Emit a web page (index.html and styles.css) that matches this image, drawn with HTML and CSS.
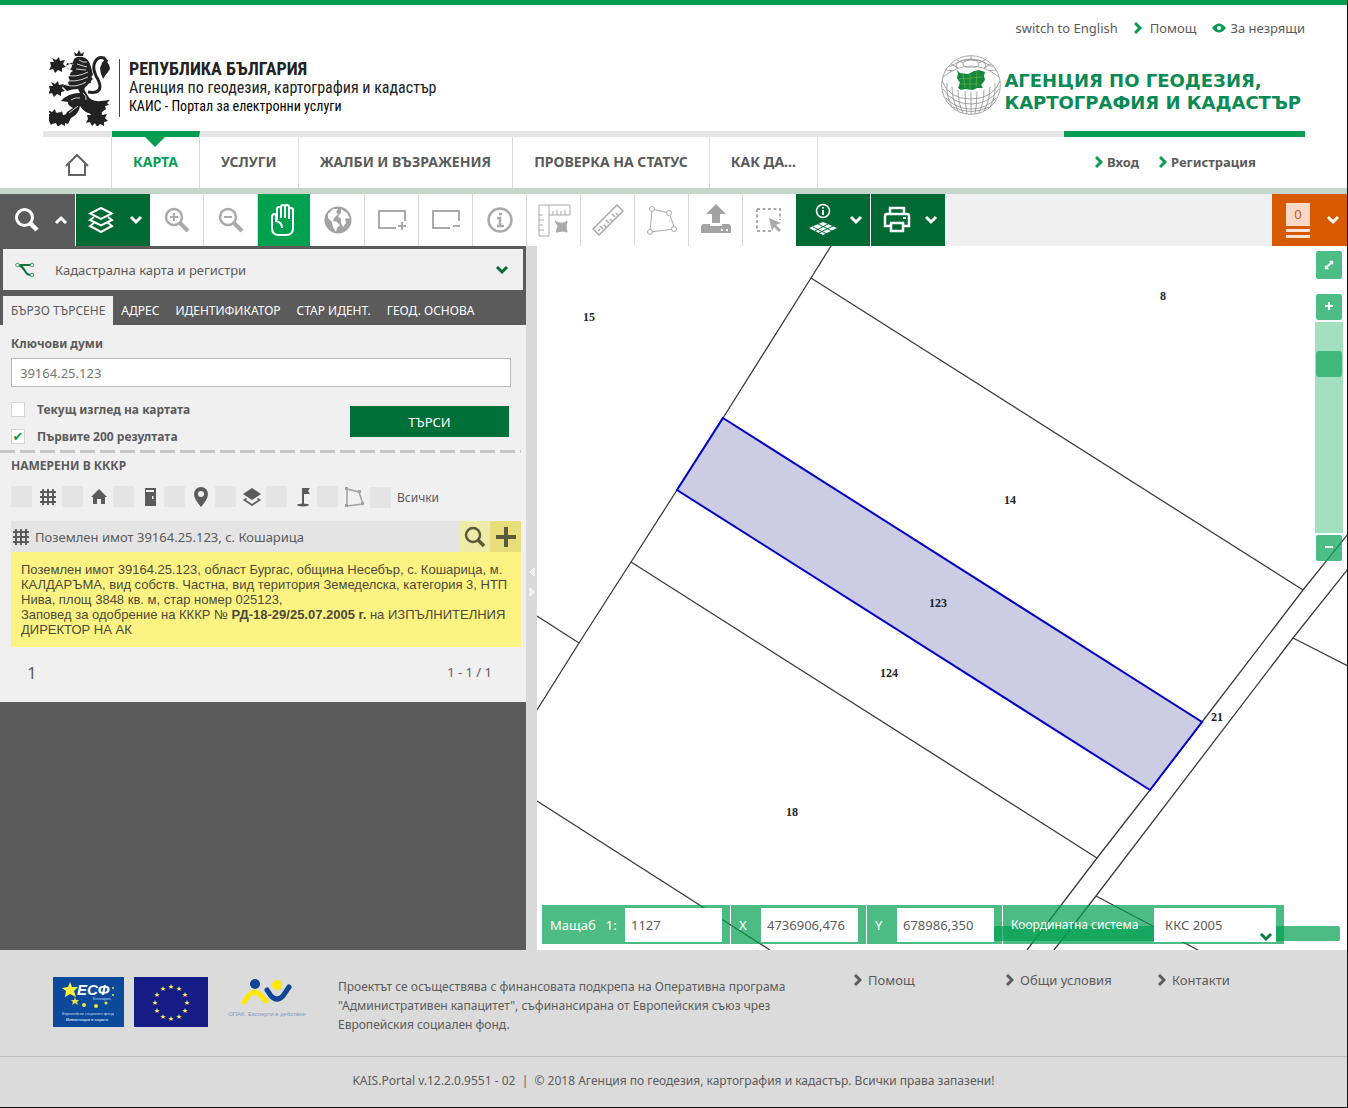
FILE: index.html
```html
<!DOCTYPE html>
<html lang="bg">
<head>
  <meta charset="UTF-8" />
  <meta name="viewport" content="width=device-width, initial-scale=1" />
  <title>КАИС - Портал за електронни услуги</title>
  <link rel="stylesheet" href="styles.css">
</head>
<body>

<header class="header">
  <div class="top-links">
    <a href="#">switch to English</a>
    <a href="#"><svg class="chev" viewBox="0 0 8 12"><path d="M1 1l5 5-5 5"/></svg>Помощ</a>
    <a href="#" class="blind"><svg width="14" height="10" viewBox="0 0 14 10"><path d="M0 5Q7-4 14 5Q7 14 0 5z" fill="#0a9c50"/><circle cx="7" cy="5" r="2" fill="#fff"/></svg>За незрящи</a>
  </div>

  <div class="logos">
    <a href="#" class="logo-left">
      <!-- coat of arms lion -->
      <svg class="lion" width="62" height="76" viewBox="0 0 62 76">
        <defs><path id="paw" d="M-7-3l4 0-2-4 4 2 3-3 1 4 5-1-2 4 3 3-4 1 0 4-4-2-3 3-2-4-4 1 2-4z"/></defs>
        <path d="M26 6l-1-4 3 2 2-4 2 4 3-2-1 4z"/>
        <path d="M17 16q1 3 4 3 2-1 2-4l2-6q3-3 8-2 6 1 8 7 2 6 3 11-3 2 0 4-3 2-2 4-3 0-4 3-4 2-2 5l3 5q3 6 13 5l9-1-3 3 2 2-4 1 1 3q-5 3-7 7l-1 7-7 0 2-9q-9-1-13-8-1 8-9 12l-3 6-6-2 5-10 6-4q-6-3-5-6l-7-1q7-8 19-8l-2-4q-6 0-11 2l-5-5q4-2 7-1-2-3 1-5-3-3 0-5 0-3 3-4l-7-4 1-4 7 2q-3-2-1-3z"/>
        <use href="#paw" x="8" y="15"/><use href="#paw" x="7" y="39"/><use href="#paw" x="11" y="69"/><use href="#paw" x="45" y="68"/>
        <use href="#paw" x="4" y="67"/><use href="#paw" x="50" y="69"/>
        <path d="M39 42q11 2 12-5 0-5-4-11-4-9-1-14 3-6 9-4l3 4" fill="none" stroke="#222" stroke-width="3"/>
        <path d="M56 9q5 6 5 10l-2 3q-2 2-5 7-3-6-3-11 2-6 5-9z"/>
        <path d="M17 25q10 3 22-3M15 30q12 3 24-3M17 35q10 3 20-3M30 10q4 3 8 2M28 14l10 3M27 19l10 1" fill="none" stroke="#fff" stroke-width=".8"/>
        <path d="M29 56l-9 7M34 43q4 3 3 7M22 50q4-3 9-2" fill="none" stroke="#fff" stroke-width=".8"/>
      </svg>
      <div class="logo-text">
        <strong>РЕПУБЛИКА БЪЛГАРИЯ</strong>
        <span>Агенция по геодезия, картография и кадастър</span>
        <span class="portal">КАИС - Портал за електронни услуги</span>
      </div>
    </a>
    <a href="#" class="logo-right">
      <svg width="60" height="60" viewBox="0 0 60 60">
        <g fill="none" stroke="#8f8f8f" stroke-width=".8">
          <circle cx="30" cy="30" r="29.3"/>
          <ellipse cx="30" cy="9" rx="8" ry="4"/>
          <ellipse cx="30" cy="11" rx="15" ry="7"/>
          <path d="M8 12Q30-3 52 12M2 22Q30 0 58 22M1 26Q8 44 30 44T59 26M2 34Q12 49 30 49T58 34M5 43Q15 54 30 54T55 43M12 52q18 9 36 0"/>
          <path d="M30 35v24M24 35q0 15 2 24M36 35q0 15-2 24M17 34q0 14 5 24M43 34q0 14-5 24M11 31q0 14 6 25M49 31q0 14-6 25M6 28q-1 14 5 24M54 28q1 14-5 24M22 8L16 5M38 8l6-3M30 5V1M17 13l-7-4M43 13l7-4M15 16L5 15M45 16l10-1"/>
        </g>
        <path d="M5 24Q12 11 30 13Q48 11 55 24Q50 36 30 37Q10 36 5 24z" fill="#fff"/>
        <path d="M16 15l3 3 8 1 6-3 5-1 6 2-1 4 1 4-3 4-1 1 2 3-6 0-4 2-8-1-4 1-3-2 2-5-3-5 1-4z" fill="#13883c"/>
        <path d="M22 19l2 14M29 18v16M36 16l-1 16M18 24l24-2M18 29l20 0" stroke="#69b43e" fill="none" stroke-width=".7"/>
      </svg>
      <span>АГЕНЦИЯ ПО ГЕОДЕЗИЯ,<br>КАРТОГРАФИЯ И КАДАСТЪР</span>
    </a>
  </div>

  <nav class="nav">
    <a href="#" class="home" aria-label="Начало"><svg width="24" height="24" viewBox="0 0 24 24"><path d="M1 13L12 2l11 11M4 11v11h16V11" fill="none" stroke="#636363" stroke-width="2"/></svg></a>
    <a href="#" class="active">КАРТА</a>
    <a href="#">УСЛУГИ</a>
    <a href="#">ЖАЛБИ И ВЪЗРАЖЕНИЯ</a>
    <a href="#">ПРОВЕРКА НА СТАТУС</a>
    <a href="#">КАК ДА...</a>
    <div class="login">
      <a href="#"><svg class="chev" viewBox="0 0 8 12"><path d="M1 1l5 5-5 5"/></svg>Вход</a>
      <a href="#"><svg class="chev" viewBox="0 0 8 12"><path d="M1 1l5 5-5 5"/></svg>Регистрация</a>
    </div>
  </nav>
</header>

<div class="toolbar">
  <button class="wide grey" aria-label="Търсене">
    <svg width="26" height="26" viewBox="0 0 26 26"><circle cx="10.500" cy="10.500" r="8" stroke-width="3"/><path d="M16 16l7 7" stroke-width="4.500"/></svg>
    <svg class="arrow" viewBox="0 0 14 10"><path d="M2 8l5-5 5 5"/></svg>
  </button>
  <button class="wide green" aria-label="Слоеве">
    <svg width="26" height="26" viewBox="0 0 26 26" stroke-width="2"><path d="M13 1l11 5.500-11 5.500L2 6.500z"/><path d="M6 10l-4 3 11 5.500L24 13l-4-3M6 16l-4 3 11 6 11-6-4-3"/></svg>
    <svg class="arrow" viewBox="0 0 14 10"><path d="M2 2l5 5 5-5"/></svg>
  </button>
  <button class="tool" aria-label="Увеличи">
    <svg width="26" height="26" viewBox="0 0 26 26"><circle cx="10" cy="10" r="8" stroke-width="2.500"/><path d="M16 16l8 8" stroke-width="4"/><path d="M6 10h8M10 6v8" stroke-width="2"/></svg>
  </button>
  <button class="tool" aria-label="Намали">
    <svg width="26" height="26" viewBox="0 0 26 26"><circle cx="10" cy="10" r="8" stroke-width="2.500"/><path d="M16 16l8 8" stroke-width="4"/><path d="M6 10h8" stroke-width="2"/></svg>
  </button>
  <button class="tool hand" aria-label="Местене">
    <svg width="26" height="34" viewBox="0 0 26 34" stroke-width="2"><path d="M6 17V6q0-2 2-2t2 2v9V4q0-2 2-2t2 2v11V4q0-2 2-2t2 2v12V7q0-2 2-2t2 2v18q0 7-7 7h-7q-7 0-7-7V14q0-3 3-3h1v7q6 1 6 7"/></svg>
  </button>
  <button class="tool" aria-label="Цялата карта">
    <svg class="solid" width="28" height="28" viewBox="0 0 28 28"><circle cx="14" cy="14" r="13.500"/><path d="M4 8l5-5 5 0-2 3 2 2-4 4-1 3 4 1 3 3-3 3-1 4-3-5-1-5-4-4zM17 3l6 4 3 6-3-1-2 1 1 4-3 4-2-4 0-4-3-3 3-3z" fill="#fff"/></svg>
  </button>
  <button class="tool" aria-label="Увеличи правоъгълник">
    <svg width="30" height="24" viewBox="0 0 30 24" stroke-width="2"><path d="M19 20H2V3h26v10M21 18h8M25 14v8"/></svg>
  </button>
  <button class="tool" aria-label="Намали правоъгълник">
    <svg width="30" height="24" viewBox="0 0 30 24" stroke-width="2"><path d="M19 20H2V3h26v10M22 18h7"/></svg>
  </button>
  <button class="tool" aria-label="Информация">
    <svg width="26" height="26" viewBox="0 0 26 26" stroke-width="2.500"><circle cx="13" cy="13" r="11.500"/><path d="M10 11h3v8M10 19h7M12 7h3"/></svg>
  </button>
  <button class="tool" aria-label="Размери">
    <svg width="34" height="34" viewBox="0 0 34 34" stroke-width="1"><path d="M2 2h31v10H12v21H2zM12 12V2M2 12h4M2 17h5M2 22h4M2 27h5M16 12V8M20 12V7M24 12V8M28 12V7"/><path d="M18 18l4 2h5l3-2-1 5 1 6-4-1-7 1 2-6z" fill="#aaa"/></svg>
  </button>
  <button class="tool" aria-label="Линийка">
    <svg width="32" height="32" viewBox="0 0 32 32" stroke-width="1.500"><path d="M1 25L25 1l6 6L7 31zM6 27l2-2M8 22l3 3M12 21l2 2M14 16l3 3M18 15l2 2M20 10l3 3M24 9l2 2"/></svg>
  </button>
  <button class="tool" aria-label="Площ">
    <svg width="30" height="30" viewBox="0 0 30 30" stroke-width="1"><path d="M5 4l17 4 6 16-25 3z"/><g fill="#fff"><circle cx="5" cy="4" r="2.500"/><circle cx="22" cy="8" r="2.500"/><circle cx="27" cy="24" r="2.500"/><circle cx="3" cy="27" r="2.500"/></g></svg>
  </button>
  <button class="tool" aria-label="Качване">
    <svg class="solid" width="32" height="32" viewBox="0 0 32 32"><path d="M16 0l10 10h-6v9h-8v-9H6z"/><path d="M3 20h7v2h12v-2h7l2 2v7H1v-7z"/><path d="M21 25h2v2h-2zM26 25h2v2h-2z" fill="#fff"/></svg>
  </button>
  <button class="tool last" aria-label="Избор">
    <svg width="28" height="28" viewBox="0 0 28 28" stroke-width="2"><path d="M2 3h23v11M2 3v22h14" stroke-dasharray="3 2.500"/><path d="M14 12l12 5-5 2 5 5-2 2-5-5-2 4z" fill="#aaa" stroke="none"/></svg>
  </button>
  <button class="wide green" aria-label="Справки">
    <svg width="30" height="34" viewBox="0 0 30 34" stroke-width="1.500"><circle cx="15" cy="8" r="6.500"/><path d="M15 7v5M15 4v1.500" stroke-width="2"/><path d="M15 19l14 6-14 7-14-7z" fill="#fff" stroke="none"/><path d="M10 21l14 7M5 24l14 7M20 21L7 28M25 23l-14 7" stroke="#006934" stroke-width="1"/></svg>
    <svg class="arrow" viewBox="0 0 14 10"><path d="M2 2l5 5 5-5"/></svg>
  </button>
  <button class="wide green" aria-label="Печат">
    <svg width="28" height="28" viewBox="0 0 28 28" stroke-width="2.500"><path d="M7 7V2h14v5M7 20H2V10q0-2 2-2h20q2 0 2 2v10h-5M8 17h12v8H8z"/><path d="M20 12h3" stroke-width="2"/></svg>
    <svg class="arrow" viewBox="0 0 14 10"><path d="M2 2l5 5 5-5"/></svg>
  </button>
  <button class="wide orange" aria-label="Кошница">
    <span class="basket"><b>0</b><i></i><i></i></span>
    <svg class="arrow" viewBox="0 0 14 10"><path d="M2 2l5 5 5-5"/></svg>
  </button>
</div>

<main class="main">
  <section class="panel">
    <div class="source">
      <svg width="20" height="16" viewBox="0 0 20 16"><path d="M3 3h13M4 3q4 2 6 6t6 4" fill="none" stroke="#12733c" stroke-width="2"/><g fill="#f0f0f0" stroke="#3fa268"><circle cx="2.500" cy="3" r="1.800"/><circle cx="17" cy="3" r="1.800"/><circle cx="17" cy="13" r="1.800"/></g></svg>
      <select aria-label="Източник"><option>Кадастрална карта и регистри</option></select>
      <svg class="arrow" viewBox="0 0 14 10"><path d="M2 2l5 5 5-5"/></svg>
    </div>
    <div class="tabs">
      <a href="#" class="current">БЪРЗО ТЪРСЕНЕ</a>
      <a href="#">АДРЕС</a>
      <a href="#">ИДЕНТИФИКАТОР</a>
      <a href="#">СТАР ИДЕНТ.</a>
      <a href="#">ГЕОД. ОСНОВА</a>
    </div>
    <div class="panel-body">
      <form class="search-form">
        <label for="keywords">Ключови думи</label>
        <input type="text" id="keywords" value="39164.25.123" />
        <div class="options">
          <div>
            <label><input type="checkbox" />Текущ изглед на картата</label>
            <label><input type="checkbox" checked />Първите 200 резултата</label>
          </div>
          <button type="button">ТЪРСИ</button>
        </div>
      </form>
      <h2>НАМЕРЕНИ В КККР</h2>
      <div class="filters">
        <label aria-label="Имоти"><input type="checkbox" /><svg width="18" height="18" viewBox="0 0 18 18"><path d="M1 4h16M1 9h16M1 14h16M4 1v16M9 1v16M14 1v16" stroke="#5b5b5b" stroke-width="2"/></svg></label>
        <label aria-label="Сгради"><input type="checkbox" /><svg width="18" height="18" viewBox="0 0 18 18"><path d="M9 1l8 8h-2v7h-4v-5H7v5H3V9H1z"/></svg></label>
        <label aria-label="Обекти"><input type="checkbox" /><svg width="18" height="18" viewBox="0 0 18 18"><path d="M4 0h11v18H4zM5 2v2h8V2zM11 8v3h1.500V8z" fill-rule="evenodd"/></svg></label>
        <label aria-label="Адреси"><input type="checkbox" /><svg width="18" height="20" viewBox="0 0 18 20"><path d="M9 0a7 7 0 0 1 7 7q0 5-7 13Q2 12 2 7a7 7 0 0 1 7-7zM9 4a3 3 0 1 0 0 6a3 3 0 0 0 0-6z" fill-rule="evenodd"/></svg></label>
        <label aria-label="Слоеве"><input type="checkbox" /><svg width="18" height="18" viewBox="0 0 18 18"><path d="M9 0l9 6-9 6-9-6zM3 10l-3 2 9 6 9-6-3-2-1 1 1 1-6 4-6-4 1-1z"/></svg></label>
        <label aria-label="Точки"><input type="checkbox" /><svg width="18" height="20" viewBox="0 0 18 20"><path d="M8 1h2v16H8zM10 1h6l-2 3 2 3h-6z"/><ellipse cx="9" cy="18" rx="6" ry="1.500"/></svg></label>
        <label aria-label="Граници"><input type="checkbox" /><svg width="20" height="20" viewBox="0 0 20 20"><path d="M2 2l12 3 4 12-16 2z" fill="none" stroke="#a3a3a3" stroke-width="1.500"/><path d="M0 0h3v3H0zM13 3h3v3h-3zM16 15h3v3h-3zM0 17h3v3H0z" fill="#a3a3a3"/></svg></label>
        <label class="all"><input type="checkbox" />Всички</label>
      </div>
      <div class="result">
        <div class="result-head">
          <svg width="18" height="18" viewBox="0 0 18 18"><path d="M1 4h16M1 9h16M1 14h16M4 1v16M9 1v16M14 1v16" stroke="#5b5b5b" stroke-width="2"/></svg>
          <span>Поземлен имот 39164.25.123, с. Кошарица</span>
          <button aria-label="Покажи"><svg width="22" height="22" viewBox="0 0 22 22"><circle cx="9" cy="9" r="7" fill="none" stroke="#5b5b3c" stroke-width="2.500"/><path d="M14 14l6 6" stroke="#5b5b3c" stroke-width="3.500"/></svg></button>
          <button class="add" aria-label="Добави"><svg width="20" height="20" viewBox="0 0 20 20"><path d="M0 10h20M10 0v20" stroke="#5b5b3c" stroke-width="4"/></svg></button>
        </div>
        <div class="result-info">
          <p>Поземлен имот 39164.25.123, област Бургас, община Несебър, с. Кошарица, м. КАЛДАРЪМА, вид собств. Частна, вид територия Земеделска, категория 3, НТП Нива, площ 3848 кв. м, стар номер 025123,</p>
          <p>Заповед за одобрение на КККР № <b>РД-18-29/25.07.2005 г.</b> на ИЗПЪЛНИТЕЛНИЯ ДИРЕКТОР НА АК</p>
        </div>
      </div>
      <div class="pager"><span class="page">1</span><span>1 - 1 / 1</span></div>
    </div>
  </section>

  <div class="splitter">
    <svg width="6" height="10" viewBox="0 0 6 10"><path d="M5 1v8L1 5z"/></svg>
    <svg width="6" height="10" viewBox="0 0 6 10"><path d="M1 1v8l4-4z"/></svg>
  </div>

  <section class="map">
    <!-- cadastral parcels -->
    <svg class="parcels" viewBox="537 246 810 704" preserveAspectRatio="xMinYMin slice">
      <g fill="none" stroke="#3c3c3c" stroke-width="1.300">
        <path d="M831 246L811 278 723 418 677 490 631 562 579 643 537 710"/>
        <path d="M811 278L1303 590M631 562L1097 858M537 616L579 643M537 801L770 950"/>
        <path d="M1348 534L1303 590 1202 722 1150 790 1097 858 1027 950"/>
        <path d="M1348 569L1293 638 1096 896 1054 950M1293 638L1348 666M1096 896L1198 950"/>
      </g>
      <path d="M723 418L1202 722 1150 790 677 490z" fill="#cccce5" stroke="#0000c8" stroke-width="2"/>
      <g class="numbers">
        <text x="589" y="321">15</text>
        <text x="1163" y="300">8</text>
        <text x="1010" y="504">14</text>
        <text x="938" y="607">123</text>
        <text x="889" y="677">124</text>
        <text x="792" y="816">18</text>
        <text x="1217" y="721">21</text>
      </g>
    </svg>

    <div class="map-controls">
      <button class="full" aria-label="Цял екран"><svg width="10" height="10" viewBox="0 0 12 12"><path d="M6 1h5v5L9 4.500 4.500 9 6 11H1V6l1.500 1.500L7.500 3z" fill="#fff"/></svg></button>
      <button class="zoom-in" aria-label="Приближи"><svg width="10" height="10" viewBox="0 0 10 10"><path d="M1 4h8M5 0v8" stroke="#fff" stroke-width="2"/></svg></button>
      <div class="track"><div class="thumb"></div></div>
      <button class="zoom-out" aria-label="Отдалечи"><svg width="10" height="10" viewBox="0 0 10 10"><path d="M1 4h8" stroke="#fff" stroke-width="2"/></svg></button>
    </div>

    <div class="scale-line"></div>
    <div class="coords">
      <label class="scale">Мащаб &nbsp; 1:<input type="text" value="1127" /></label>
      <label>X<input type="text" value="4736906,476" /></label>
      <label>Y<input type="text" value="678986,350" /></label>
      <label class="system"><span>Координатна система</span>
        <select><option>ККС 2005</option></select>
        <svg class="arrow" viewBox="0 0 14 10"><path d="M2 2l5 5 5-5"/></svg>
      </label>
    </div>
  </section>
</main>

<footer class="footer">
  <div class="footer-main">
    <svg width="71" height="50" viewBox="0 0 71 50">
      <path d="M0 0h71v50H0z" fill="#0b4a9b"/>
      <path d="M17 5l2 5 6 0-4 4 2 6-6-3-5 3 1-6-4-3 6-1z" fill="#fff33b"/>
      <text class="esf" x="24" y="18">ЕСФ</text>
      <text class="esf-small" x="40" y="23">България</text>
      <g fill="#e9e34a"><path d="M22 20l1 3h3l-2 2 1 3-3-2-3 2 1-3-2-2h3z"/><circle cx="31" cy="28" r="2"/><circle cx="43" cy="29" r="2"/><circle cx="53" cy="26" r="1.500"/><circle cx="60" cy="18" r="1"/><circle cx="60" cy="11" r="1"/></g>
      <text class="esf-small" x="9" y="38">Европейски социален фонд</text>
      <text class="esf-small bold" x="13" y="44">Инвестиции в хората</text>
    </svg>
    <svg width="74" height="50" viewBox="0 0 74 50">
      <path d="M0 0h74v50H0z" fill="#151c86"/>
      <g class="eu-stars">
        <text x="37" y="12">★</text><text x="45" y="14">★</text><text x="51" y="20">★</text><text x="53" y="28">★</text>
        <text x="51" y="36">★</text><text x="45" y="42">★</text><text x="37" y="44">★</text><text x="29" y="42">★</text>
        <text x="23" y="36">★</text><text x="21" y="28">★</text><text x="23" y="20">★</text><text x="29" y="14">★</text>
      </g>
    </svg>
    <svg class="opak" width="86" height="50" viewBox="0 0 86 50">
      <circle cx="31" cy="7" r="5" fill="#0f4593"/><circle cx="53" cy="8" r="5" fill="#ffe800"/>
      <path d="M20 25l5-7q5-5 10-1l7 7" fill="none" stroke="#ffe800" stroke-width="5" stroke-linecap="round"/>
      <path d="M43 13l4 6q6 6 12 0l6-9" fill="none" stroke="#0f4593" stroke-width="5" stroke-linecap="round"/>
      <text x="43" y="39">ОПАК. Експерти в действие</text>
    </svg>
    <p>Проектът се осъществява с финансовата подкрепа на Оперативна програма "Административен капацитет", съфинансирана от Европейския съюз чрез Европейския социален фонд.</p>
    <nav>
      <a href="#"><svg class="chev" viewBox="0 0 8 12"><path d="M1 1l5 5-5 5"/></svg>Помощ</a>
      <a href="#"><svg class="chev" viewBox="0 0 8 12"><path d="M1 1l5 5-5 5"/></svg>Общи условия</a>
      <a href="#"><svg class="chev" viewBox="0 0 8 12"><path d="M1 1l5 5-5 5"/></svg>Контакти</a>
    </nav>
  </div>
  <div class="copyright">KAIS.Portal v.12.2.0.9551 - 02 &nbsp;|&nbsp; © 2018 Агенция по геодезия, картография и кадастър. Всички права запазени!</div>
</footer>

</body>
</html>
```
FILE: styles.css
```css
* {
  box-sizing: border-box;
}
body {
  margin: 0;
  min-height: 100vh;
  display: flex;
  flex-direction: column;
  font-family: "Noto Sans", "Open Sans", sans-serif;
  font-size: 13px;
  color: #5b5b5b;
  background: #fff;
  border-right: 1px solid #111;
  border-bottom: 1px solid #111;
}
a {
  color: inherit;
  text-decoration: none;
}
button {
  border: 0;
  padding: 0;
  font: inherit;
  cursor: pointer;
}
input, select {
  font: inherit;
  color: inherit;
}
svg {
  flex: none;
}
.chev {
  width: 8px;
  height: 12px;
}
.chev path, .arrow path {
  fill: none;
  stroke: #0a9c50;
  stroke-width: 3;
}
.arrow {
  width: 14px;
  height: 10px;
}

/* header */
.header {
  border-top: 5px solid #069d52;
  border-bottom: 6px solid #c5d5cb;
  padding: 0 42px 0 43px;
}
.top-links {
  display: flex;
  justify-content: flex-end;
  gap: 16px;
  height: 45px;
  align-items: center;
}
.top-links a {
  display: flex;
  align-items: center;
  gap: 8px;
}
.top-links .blind {
  gap: 4px;
}
.logos {
  display: flex;
  justify-content: space-between;
  height: 81px;
}
.logo-left {
  display: flex;
  padding-left: 6px;
}
.lion {
  fill: #222;
}
.logo-text {
  border-left: 1px solid #444;
  margin: 9px 0 14px 8px;
  padding-left: 9px;
  display: flex;
  flex-direction: column;
  font-family: "Liberation Sans Narrow", "Roboto Condensed", "DejaVu Sans Condensed", sans-serif;
  font-size: 16px;
  line-height: 19px;
  color: #222;
}
.logo-text strong {
  font-size: 18px;
}
.logo-text .portal {
  font-size: 14px;
  color: #000;
}
.logo-right {
  display: flex;
  gap: 3px;
  padding: 5px 4px 0 0;
  font: bold 18px/22px "DejaVu Sans", sans-serif;
  color: #0a8a55;
}
.logo-right span {
  padding-top: 15px;
}
.nav {
  display: flex;
  height: 57px;
  border-top: 6px solid #e5e5e5;
  font-weight: bold;
  font-size: 14px;
}
.nav > a {
  display: flex;
  align-items: center;
  padding: 0 21px 2px;
  border-right: 1px solid #dcdcdc;
}
.nav .home {
  padding: 4px 22px 0;
}
.nav .active {
  position: relative;
  margin-top: -6px;
  border-top: 6px solid #069d52;
  color: #069d52;
}
.nav .active::before {
  content: "";
  position: absolute;
  top: 0;
  left: 50%;
  margin-left: -10px;
  border: 10px solid transparent;
  border-top-color: #069d52;
  border-bottom: 0;
}
.login {
  width: 241px;
  margin: -6px 0 0 auto;
  border-top: 6px solid #069d52;
  display: flex;
  align-items: center;
  gap: 20px;
  padding: 0 0 2px 31px;
  font-size: 13px;
}
.login a {
  display: flex;
  align-items: center;
  gap: 4px;
}

/* toolbar */
.toolbar {
  display: flex;
  height: 52px;
  background: #f0f0f0;
}
.toolbar button {
  display: flex;
  align-items: center;
  justify-content: center;
}
.toolbar svg {
  fill: none;
  stroke: #aaa;
}
.toolbar .solid {
  fill: #a3a3a3;
  stroke: none;
}
.toolbar .tool {
  width: 54px;
  background: #fff;
  border-right: 1px solid #d5dcd8;
}
.toolbar .hand {
  width: 53px;
  background: #00a14e;
  border-right-color: #fff;
}
.toolbar .last {
  border-right: 0;
  width: 52px;
}
.toolbar .wide {
  width: 75px;
  justify-content: space-between;
  padding: 0 7px 0 14px;
}
.toolbar .wide svg, .toolbar .hand svg {
  stroke: #fff;
}
.toolbar .wide .arrow path {
  stroke: #fff;
}
.grey {
  background: #5b5b5b;
}
.green {
  background: #006934;
}
.toolbar .green {
  border-left: 1px solid #fff;
  padding-left: 12px;
}
.toolbar .orange {
  background: #d85a00;
  margin-left: auto;
}
.basket {
  width: 24px;
}
.basket b {
  display: block;
  font-weight: normal;
  line-height: 23px;
  background: #f9d9c6;
  color: #c45a13;
}
.basket i {
  display: block;
  height: 3px;
  margin-top: 3px;
  background: #fbe3d3;
}

/* search panel */
.main {
  flex: 1;
  display: flex;
}
.panel {
  width: 526px;
  flex: none;
  background: #5b5b5b;
}
.source {
  display: flex;
  align-items: center;
  margin: 3px 3px 6px;
  padding: 0 14px 0 12px;
  height: 41px;
  background: #f0f0f0;
}
.source select {
  flex: 1;
  margin-left: 20px;
  border: 0;
  padding: 0;
  background: none;
  appearance: none;
}
.source .arrow path {
  stroke: #006934;
}
.tabs {
  display: flex;
  padding-left: 3px;
  font-size: 12px;
  line-height: 29px;
  color: #fff;
}
.tabs a {
  padding: 0 8px;
}
.tabs .current {
  background: #f0f0f0;
  color: #5b5b5b;
}
.panel-body {
  height: 377px;
  padding: 10px 5px 0 11px;
  background: #f0f0f0;
}
.search-form {
  padding-right: 10px;
  font-weight: bold;
  font-size: 12px;
}
.search-form > label {
  display: block;
  line-height: 18px;
}
.search-form input[type=text] {
  display: block;
  width: 100%;
  height: 29px;
  margin-top: 5px;
  padding: 0 8px;
  border: 1px solid #bbb;
  font-weight: normal;
  font-size: 13px;
  color: #777;
}
.options {
  display: flex;
  justify-content: space-between;
  padding: 9px 2px 0 0;
}
.options label {
  display: flex;
  align-items: center;
  height: 27px;
}
.options input {
  appearance: none;
  width: 14px;
  height: 15px;
  margin: 0 12px 0 0;
  border: 1px solid #d5d5d5;
  background: #fff;
}
.options input:checked::before {
  content: "✔";
  display: block;
  font: 13px/13px "DejaVu Sans", sans-serif;
  text-align: center;
  color: #069d52;
}
.options button {
  width: 159px;
  height: 31px;
  margin-top: 10px;
  background: #007038;
  color: #fff;
  font-size: 13px;
  font-weight: normal;
}
.panel h2 {
  margin: 0 0 0 -11px;
  padding: 7px 0 0 11px;
  font-size: 12px;
  line-height: 18px;
  background: repeating-linear-gradient(90deg, #c6c6c6 0 15px, transparent 15px 20px) 0 0 / 100% 3px no-repeat;
}
.filters {
  display: flex;
  margin-top: 11px;
  font-size: 12px;
}
.filters label {
  display: flex;
  align-items: center;
  width: 51px;
  height: 21px;
}
.filters input {
  appearance: none;
  width: 21px;
  height: 21px;
  margin: 0 6px 0 0;
  background: #e4e4e4;
}
.filters svg {
  margin-left: 1px;
  fill: #5b5b5b;
}
.filters .all {
  width: auto;
  margin: 1px 0 0 2px;
}
.result {
  margin-top: 13px;
}
.result-head {
  display: flex;
  align-items: center;
  height: 31px;
  background: #e4e4e4;
}
.result-head > svg {
  margin-left: 1px;
}
.result-head span {
  flex: 1;
  margin-left: 5px;
}
.result-head button {
  width: 31px;
  height: 31px;
  background: #efeba9;
  display: flex;
  align-items: center;
  justify-content: center;
}
.result-head .add {
  background: #e8df7c;
}
.result-info {
  padding: 10px;
  background: #fcf383;
  font: 13px/15px "Liberation Sans", sans-serif;
  color: #4c4a3a;
}
.result-info p {
  margin: 0;
}
.pager {
  display: flex;
  justify-content: space-between;
  align-items: center;
  height: 50px;
  padding: 0 29px 0 16px;
}
.pager .page {
  font-size: 17px;
}
.splitter {
  width: 11px;
  flex: none;
  display: flex;
  flex-direction: column;
  justify-content: center;
  align-items: center;
  gap: 10px;
  padding-bottom: 32px;
  background: #dadada;
}
.splitter path {
  fill: #ececec;
  stroke: #fff;
}

/* map */
.map {
  position: relative;
  flex: 1;
  overflow: hidden;
}
.parcels {
  position: absolute;
  width: 100%;
  height: 100%;
}
.numbers {
  font: bold 12px "Liberation Serif", serif;
  text-anchor: middle;
  fill: #222;
}
.map-controls {
  position: absolute;
  top: 5px;
  right: 4px;
  width: 28px;
}
.map-controls button {
  display: flex;
  align-items: center;
  justify-content: center;
  width: 26px;
  height: 26px;
  margin: 0 1px;
  background: rgba(18, 167, 93, 0.75);
  border-radius: 2px;
}
.map-controls .full {
  height: 28px;
  margin-bottom: 15px;
}
.track {
  height: 211px;
  margin: 2px 0;
  padding: 29px 1px 0;
  background: #a2dfbf;
}
.thumb {
  height: 26px;
  border-radius: 3px;
  background: #41b97c;
}
.scale-line {
  position: absolute;
  right: 7px;
  bottom: 9px;
  width: 346px;
  height: 15px;
  border-radius: 2px;
  background: rgba(0, 160, 80, 0.7);
}
.coords {
  position: absolute;
  left: 5px;
  bottom: 6px;
  display: flex;
  gap: 1px;
}
.coords label {
  display: flex;
  align-items: center;
  justify-content: space-between;
  width: 135px;
  height: 39px;
  padding: 0 8px;
  background: rgba(0, 160, 80, 0.7);
  color: #fff;
}
.coords .scale {
  width: 188px;
}
.coords .system {
  position: relative;
  width: 281px;
}
.coords span {
  font-size: 12px;
}
.coords input, .coords select {
  width: 97px;
  height: 34px;
  padding: 0 6px;
  border: 0;
  background: #fff;
  color: #5b5b5b;
}
.coords select {
  width: 122px;
  padding: 0 11px;
  appearance: none;
}
.coords .arrow {
  position: absolute;
  right: 11px;
  bottom: 2px;
}
.coords .arrow path {
  stroke: #00803f;
}

/* footer */
.footer {
  background: #dbdbdb;
}
.footer-main {
  display: flex;
  gap: 10px;
  height: 107px;
  padding: 27px 0 0 53px;
  border-bottom: 1px solid #bfbfbf;
}
.footer-main p {
  width: 470px;
  margin: 0 0 0 18px;
  font-size: 12px;
  line-height: 19px;
}
.opak {
  margin-left: 6px;
}
.opak text {
  font: 6px "Liberation Sans", sans-serif;
  text-anchor: middle;
  fill: #7f9bc4;
}
.esf {
  font: italic bold 15px "Liberation Sans", sans-serif;
  fill: #fff;
}
.esf-small {
  font: 4px "Liberation Sans", sans-serif;
  fill: #c8daf2;
}
.esf-small.bold {
  font-weight: bold;
}
.eu-stars {
  font: 7px "DejaVu Sans", sans-serif;
  text-anchor: middle;
  fill: #f5ee55;
}
.footer-main nav {
  display: grid;
  grid-template-columns: repeat(3, 152px);
  margin: -7px 0 0 36px;
  line-height: 20px;
}
.footer-main nav a {
  display: flex;
  gap: 6px;
  height: 20px;
  align-items: center;
}
.footer-main nav .chev path {
  stroke: #5b5b5b;
}
.copyright {
  height: 50px;
  line-height: 48px;
  text-align: center;
  font-size: 12px;
}
```
